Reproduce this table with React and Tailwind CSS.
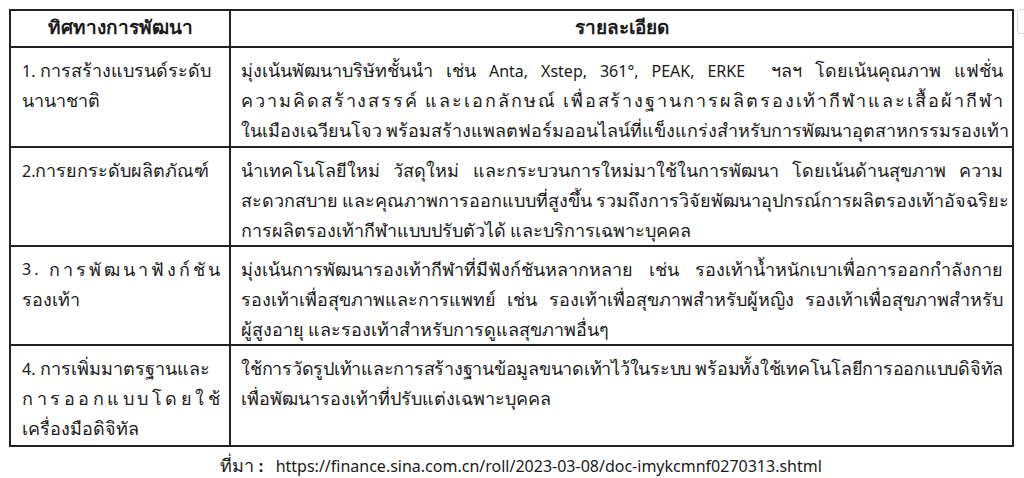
import React from "react";

const font = { fontFamily: "'Noto Sans', sans-serif" };
const TH = /[\u0E00-\u0E7F]/;

function T({ children, head = false }) {
  const text = String(children);
  const parts = text.split(/([\u0E00-\u0E7F]+)/);
  return (
    <>
      {parts.map((p, i) =>
        TH.test(p) ? (
          <span key={i} className={head ? "text-[19px]" : "text-[18px]"}>{p}</span>
        ) : (
          <span key={i}>{p}</span>
        )
      )}
    </>
  );
}

function graphemes(s) {
  if (typeof Intl !== "undefined" && Intl.Segmenter) {
    return Array.from(new Intl.Segmenter("th", { granularity: "grapheme" }).segment(s), (x) => x.segment);
  }
  return Array.from(s);
}

function D({ children }) {
  const gs = graphemes(String(children));
  return (
    <div className="h-[30px] flex justify-between whitespace-pre">
      {gs.map((g, i) => (
        <span key={i} className={TH.test(g) ? "text-[18px]" : ""}>{g}</span>
      ))}
    </div>
  );
}

function J({ children, last = false, cls = "" }) {
  return (
    <div className={`h-[30px] whitespace-nowrap ${last ? "" : "text-justify [text-align-last:justify]"} ${cls}`}>
      <T>{children}</T>
    </div>
  );
}

function L({ children }) {
  return (
    <div className="h-[30px] whitespace-nowrap">
      <T>{children}</T>
    </div>
  );
}

const cell1 = "border-2 border-[#222] align-top pl-[11px] pr-[9px] pt-[7px]";
const cell2 = "border-2 border-[#222] align-top pl-[10px] pr-[9px] pt-[7px]";

export default function App() {
  return (
    <div className="relative w-[1024px] h-[478px] bg-white text-[#1a1a1a] text-[16px] leading-[30px]" style={font}>
      <div className="absolute right-0 top-[9px] w-[7px] h-[25px] rounded-l-[4px] border border-r-0 border-[#d8d8d8] bg-white" />
      <div className="pl-[9px] pt-[9px]">
        <table className="w-[1005px] table-fixed border-collapse border-2 border-[#222]">
          <colgroup>
            <col className="w-[220px]" />
            <col />
          </colgroup>
          <tbody>
            <tr className="h-[37px]">
              <th className="border-2 border-[#222] font-bold text-center align-middle pb-[3px]"><T head>ทิศทางการพัฒนา</T></th>
              <th className="border-2 border-[#222] font-bold text-center align-middle pb-[3px]"><T head>รายละเอียด</T></th>
            </tr>
            <tr className="h-[100px]">
              <td className={cell1}>
                <L>1. การสร้างแบรนด์ระดับ</L>
                <L>นานาชาติ</L>
              </td>
              <td className={cell2}>
                <J>{"มุ่งเน้นพัฒนาบริษัทชั้นนำ เช่น Anta, Xstep, 361°, PEAK, ERKE \u00a0ฯลฯ โดยเน้นคุณภาพ แฟชั่น"}</J>
                <D>ความคิดสร้างสรรค์ และเอกลักษณ์ เพื่อสร้างฐานการผลิตรองเท้ากีฬาและเสื้อผ้ากีฬา</D>
                <J last>ในเมืองเฉวียนโจว พร้อมสร้างแพลตฟอร์มออนไลน์ที่แข็งแกร่งสำหรับการพัฒนาอุตสาหกรรมรองเท้า</J>
              </td>
            </tr>
            <tr className="h-[99px]">
              <td className={cell1}>
                <L>2.การยกระดับผลิตภัณฑ์</L>
              </td>
              <td className={cell2}>
                <J>นำเทคโนโลยีใหม่ วัสดุใหม่ และกระบวนการใหม่มาใช้ในการพัฒนา โดยเน้นด้านสุขภาพ ความ</J>
                <J>สะดวกสบาย และคุณภาพการออกแบบที่สูงขึ้น รวมถึงการวิจัยพัฒนาอุปกรณ์การผลิตรองเท้าอัจฉริยะ</J>
                <J last>การผลิตรองเท้ากีฬาแบบปรับตัวได้ และบริการเฉพาะบุคคล</J>
              </td>
            </tr>
            <tr className="h-[98px]">
              <td className={cell1}>
                <D>3. การพัฒนาฟังก์ชัน</D>
                <L>รองเท้า</L>
              </td>
              <td className={cell2}>
                <J>มุ่งเน้นการพัฒนารองเท้ากีฬาที่มีฟังก์ชันหลากหลาย เช่น รองเท้าน้ำหนักเบาเพื่อการออกกำลังกาย</J>
                <J>รองเท้าเพื่อสุขภาพและการแพทย์ เช่น รองเท้าเพื่อสุขภาพสำหรับผู้หญิง รองเท้าเพื่อสุขภาพสำหรับ</J>
                <J last>ผู้สูงอายุ และรองเท้าสำหรับการดูแลสุขภาพอื่นๆ</J>
              </td>
            </tr>
            <tr className="h-[101px]">
              <td className={cell1}>
                <L>4. การเพิ่มมาตรฐานและ</L>
                <D>การออกแบบโดยใช้</D>
                <L>เครื่องมือดิจิทัล</L>
              </td>
              <td className={cell2}>
                <J cls="tracking-[-0.25px]">ใช้การวัดรูปเท้าและการสร้างฐานข้อมูลขนาดเท้าไว้ในระบบ พร้อมทั้งใช้เทคโนโลยีการออกแบบดิจิทัล</J>
                <J last>เพื่อพัฒนารองเท้าที่ปรับแต่งเฉพาะบุคคล</J>
              </td>
            </tr>
          </tbody>
        </table>
        <div className="mt-[3px] pl-[211px] whitespace-nowrap">
          <span className="text-[18px]">ที่มา </span><span className="font-bold">:</span><span>{"\u00a0\u00a0 https://finance.sina.com.cn/roll/2023-03-08/doc-imykcmnf0270313.shtml"}</span>
        </div>
      </div>
    </div>
  );
}
